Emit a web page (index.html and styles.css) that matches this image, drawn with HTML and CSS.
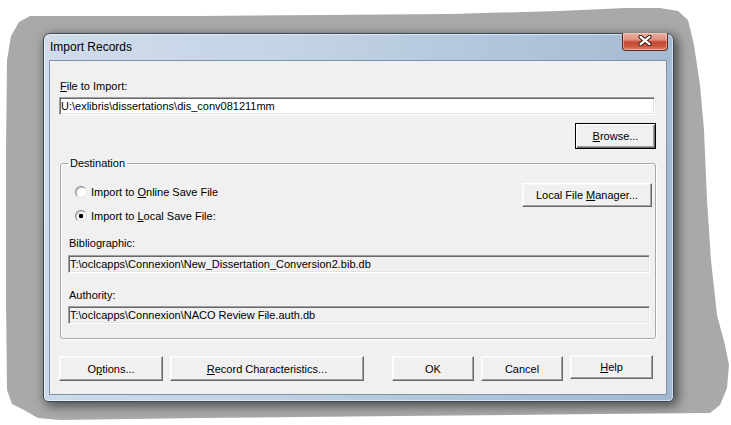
FILE: index.html
```html
<!DOCTYPE html>
<html lang="en">
<head>
    <meta charset="UTF-8">
    <title>Import Records</title>
    <link rel="stylesheet" href="styles.css">
</head>
<body>
    <div class="desk">
        <div class="window">
            <div class="titlebar">
                <span class="title">Import Records</span>
                <button class="close-btn" title="Close">
                    <svg width="14" height="11" viewBox="0 0 14 11">
                        <path d="M2.5 1.8 L11.5 9.2 M11.5 1.8 L2.5 9.2" stroke="#3a1812" stroke-width="4.2" stroke-linecap="round"/>
                        <path d="M2.5 1.8 L11.5 9.2 M11.5 1.8 L2.5 9.2" stroke="#fff" stroke-width="2.2" stroke-linecap="round"/>
                    </svg>
                </button>
            </div>

            <div class="client">
                <div class="label"><u>F</u>ile to Import:</div>
                <div class="field field-edit">U:\exlibris\dissertations\dis_conv081211mm</div>

                <div class="browse-row">
                    <button class="btn btn-default browse-btn"><u>B</u>rowse...</button>
                </div>

                <fieldset class="group">
                    <legend>Destination</legend>
                    <div class="dest-top">
                        <div class="radios">
                            <label class="radio"><span class="radio-dot"></span><span>Import to <u>O</u>nline Save File</span></label>
                            <label class="radio checked"><span class="radio-dot"></span><span>Import to <u>L</u>ocal Save File:</span></label>
                        </div>
                        <button class="btn manager-btn">Local File <u>M</u>anager...</button>
                    </div>

                    <div class="label sub-label bib-label">Bibliographic:</div>
                    <div class="field bib-field">T:\oclcapps\Connexion\New_Dissertation_Conversion2.bib.db</div>

                    <div class="label sub-label auth-label">Authority:</div>
                    <div class="field auth-field">T:\oclcapps\Connexion\NACO Review File.auth.db</div>
                </fieldset>

                <div class="actions">
                    <button class="btn options-btn">O<u>p</u>tions...</button>
                    <button class="btn chars-btn"><u>R</u>ecord Characteristics...</button>
                    <button class="btn ok-btn">OK</button>
                    <button class="btn cancel-btn">Cancel</button>
                    <button class="btn help-btn"><u>H</u>elp</button>
                </div>
            </div>
        </div>
    </div>
</body>
</html>
```

FILE: styles.css
```css
* {
    margin: 0;
    padding: 0;
    box-sizing: border-box;
    font-family: 'Liberation Sans', Arial, sans-serif;
}

body {
    background: #fff;
    width: 731px;
    height: 425px;
    overflow: hidden;
}

/* grey torn-edge backdrop behind the dialog */
.desk {
    width: 731px;
    height: 425px;
    padding: 33px 57px 23px 43px;
    background: #a9a9a9;
    clip-path: polygon(30px 16px, 200px 16px, 450px 14px, 560px 11px, 625px 8px, 660px 8px, 678px 11px,
        688px 20px, 694px 45px, 700px 85px, 704px 130px, 707px 200px, 711px 260px, 717px 315px,
        725px 345px, 729px 365px, 727px 388px, 720px 405px, 710px 413px, 600px 414px, 400px 416px,
        200px 418px, 60px 420px, 38px 418px, 24px 410px, 12px 404px, 7px 390px, 6px 300px,
        6px 150px, 7px 60px, 11px 36px, 19px 22px);
}

.window {
    width: 631px;
    height: 369px;
    border: 1px solid #3b4858;
    border-radius: 7px 7px 5px 5px;
    background: linear-gradient(100deg, #d0dceb 0%, #c4d4e6 35%, #afc3d9 70%, #a2b8d0 100%);
    box-shadow: inset 0 0 0 1px rgba(255, 255, 255, 0.55), 3px 3px 11px 1px rgba(0, 0, 0, 0.55);
    padding-bottom: 6px;
}

.titlebar {
    height: 26px;
    display: flex;
    justify-content: space-between;
    align-items: flex-start;
}

.title {
    font-size: 12px;
    line-height: 26px;
    padding-left: 6px;
    color: #000;
}

.close-btn {
    width: 46px;
    height: 18px;
    margin-top: -1px;
    margin-right: 5px;
    border: 1px solid #5b2a22;
    border-top: none;
    border-radius: 0 0 4px 4px;
    background: linear-gradient(#eab0a2 0%, #df9080 40%, #c64b35 52%, #c9573d 78%, #e08a6c 100%);
    box-shadow: inset 0 0 0 1px rgba(255, 220, 210, 0.45);
    display: flex;
    align-items: center;
    justify-content: center;
    padding-bottom: 2px;
}

.client {
    margin: 0 6px 0 5px;
    border: 1px solid #7e93aa;
    background: #f0f0f0;
    padding: 0 11px 13px 9px;
    font-size: 11px;
    color: #000;
}

.label {
    font-size: 11px;
    line-height: 14px;
    height: 14px;
    margin-top: 18px;
    margin-left: 1px;
}

.field {
    height: 18px;
    line-height: 16px;
    font-size: 11px;
    white-space: nowrap;
    overflow: hidden;
    background: #f0f0f0;
    border: 1px solid;
    border-color: #a0a0a0 #fff #fff #a0a0a0;
    box-shadow: inset 1px 1px #696969, inset -1px -1px #e3e3e3;
    padding-left: 1px;
}

.field-edit {
    background: #fff;
    margin-top: 4px;
}

.btn {
    font-size: 11px;
    color: #000;
    background: #f0f0f0;
    height: 25px;
    border: 1px solid;
    border-color: #fff #696969 #696969 #fff;
    box-shadow: inset -1px -1px #a0a0a0, inset 1px 1px #f8f8f8;
    text-align: center;
}

.btn-default {
    border-color: #000;
    box-shadow: inset 1px 1px #fff, inset -1px -1px #696969, inset -2px -2px #a0a0a0;
}

.browse-row {
    display: flex;
    justify-content: flex-end;
    margin-top: 8px;
    margin-right: -1px;
}

.browse-btn {
    width: 81px;
    height: 26px;
}

.group {
    margin: 7px -1px 0 1px;
    padding: 0 5px 14px 7px;
    border: 1px solid #a8a8a8;
    border-radius: 3px;
    box-shadow: 1px 1px 0 #fff, inset 1px 1px 0 #fff;
    min-width: 0;
}

.group legend {
    font-size: 11px;
    line-height: 14px;
    padding: 0 2px;
}

.dest-top {
    display: flex;
    justify-content: space-between;
    align-items: flex-start;
    margin-top: 13px;
}

.radios {
    display: flex;
    flex-direction: column;
    gap: 8px;
    margin-top: 1px;
}

.radio {
    display: flex;
    align-items: center;
    height: 16px;
    gap: 4px;
    margin-left: 7px;
    font-size: 11px;
}

.radio-dot {
    width: 12px;
    height: 12px;
    border-radius: 50%;
    border: 1px solid;
    border-color: #8a8a8a #e6e6e6 #e6e6e6 #8a8a8a;
    background: radial-gradient(circle at 60% 60%, #fff 45%, #e4e4e4 100%);
    box-shadow: inset 1px 1px 0 #c8c8c8;
}

.radio.checked .radio-dot {
    background: radial-gradient(circle, #000 0 2px, #fff 2.6px 45%, #e4e4e4 100%);
}

.manager-btn {
    width: 130px;
    height: 24px;
    margin-right: -2px;
}

.sub-label {
    margin-left: 1px;
}

.bib-label {
    margin-top: 12px;
}

.bib-field {
    margin-top: 5px;
}

.auth-label {
    margin-top: 15px;
}

.auth-field {
    margin-top: 4px;
}

.actions {
    display: flex;
    align-items: flex-start;
    gap: 7px;
    margin-top: 17px;
    padding-right: 2px;
}

.options-btn {
    width: 104px;
}

.chars-btn {
    width: 194px;
}

.ok-btn {
    width: 82px;
    margin-left: auto;
}

.cancel-btn {
    width: 82px;
}

.help-btn {
    width: 83px;
    height: 24px;
    margin-top: -1px;
}
```
